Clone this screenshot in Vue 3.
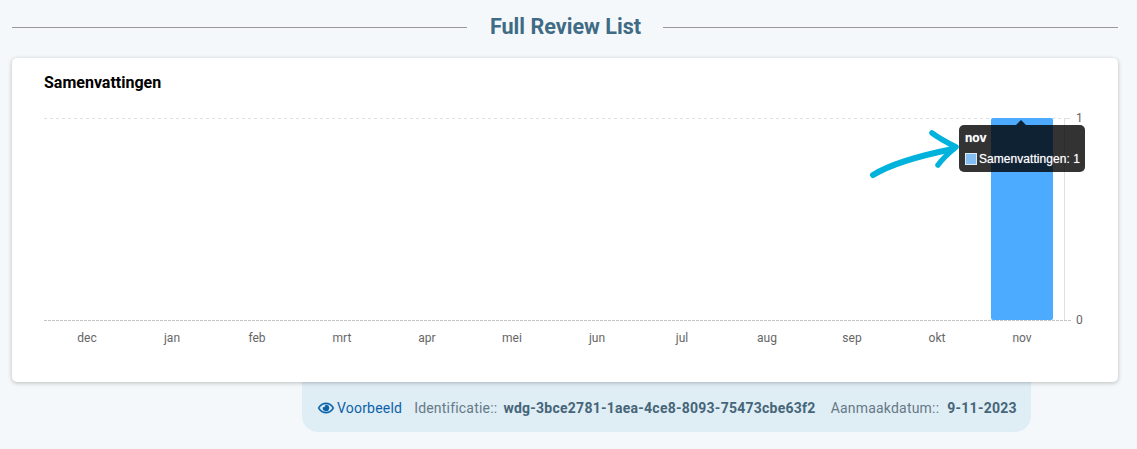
<template>
  <div class="page">
    <div class="heading">
      <span class="rule"></span>
      <h1>Full Review List</h1>
      <span class="rule"></span>
    </div>
    <section class="card">
      <h2>Samenvattingen</h2>
      <div class="chart">
        <svg class="plot" width="1106" height="254" viewBox="0 0 1106 254">
          <line x1="32" y1="10.5" x2="1052" y2="10.5" class="grid" />
          <rect x="979" y="10" width="62" height="202" rx="2" fill="#4dabff" />
          <line x1="1052.5" y1="10" x2="1052.5" y2="212" stroke="#e0e0e0" />
          <line x1="1052" y1="10.5" x2="1058" y2="10.5" stroke="#e0e0e0" />
          <line x1="32" y1="212.5" x2="1060" y2="212.5" class="base" />
          <text x="1064" y="14" class="y">1</text>
          <text x="1064" y="216" class="y">0</text>
          <text v-for="(m, i) in months" :key="m" :x="75 + i * 85" y="234" class="x">{{ m }}</text>
        </svg>
        <svg class="arrow" width="110" height="70" viewBox="0 0 110 70">
          <path d="M15 61 C33 50 60 42 95 35" fill="none" stroke="#00b2dc" stroke-width="6" stroke-linecap="round" />
          <path d="M74 19 C82 25 90 29 98 33 C92 38 85 44 80 51" fill="none" stroke="#00b2dc" stroke-width="5.5" stroke-linecap="round" stroke-linejoin="round" />
        </svg>
        <div class="tooltip">
          <span class="caret"></span>
          <strong>nov</strong>
          <div class="tip-row"><i class="swatch"></i>Samenvattingen: 1</div>
        </div>
      </div>
    </section>
    <div class="meta">
      <a class="preview">
        <svg width="18" height="14" viewBox="0 0 576 512"><path fill="#0b62a8" stroke="#0b62a8" stroke-width="14" d="M288 144a110.900 110.900 0 0 0-31.200 5 55.400 55.400 0 0 1 7.200 27 56 56 0 0 1-56 56 55.400 55.400 0 0 1-27-7.200A111.700 111.700 0 1 0 288 144zm284.500 97.400C518.300 135.600 410.900 64 288 64S57.700 135.600 3.500 241.400a32.400 32.400 0 0 0 0 29.200C57.700 376.400 165.100 448 288 448s230.300-71.600 284.500-177.400a32.400 32.400 0 0 0 0-29.200zM288 400c-98.600 0-189-55-237.800-144C99 167 189.400 112 288 112s189 55 237.800 144C477 345 386.600 400 288 400z"/></svg>
        Voorbeeld
      </a>
      <span class="label">Identificatie::</span>
      <b>wdg-3bce2781-1aea-4ce8-8093-75473cbe63f2</b>
      <span class="label second">Aanmaakdatum::</span>
      <b class="date">9-11-2023</b>
    </div>
  </div>
</template>

<script setup>
const months = ['dec', 'jan', 'feb', 'mrt', 'apr', 'mei', 'jun', 'jul', 'aug', 'sep', 'okt', 'nov']
</script>

<style>
html, body { margin: 0; background: #f5f8fa; }
</style>

<style scoped>
.page {
  width: 1137px;
  height: 449px;
  box-sizing: border-box;
  padding: 12px 19px 0 12px;
  font-family: Roboto, "Liberation Sans", sans-serif;
  overflow: hidden;
  background: #f5f8fa;
}
.heading {
  display: flex;
  align-items: center;
  height: 30px;
  margin-bottom: 16px;
}
.rule { flex: 1; height: 1px; background: #999; }
.heading h1 {
  margin: 0 22px 0 23px;
  font-size: 21.6px;
  line-height: 30px;
  font-weight: 700;
  color: #3f6b85;
}
.card {
  height: 324px;
  box-sizing: border-box;
  padding: 16px 32px 0;
  background: #fff;
  border-radius: 5px;
  box-shadow: 0 1px 4px rgba(0, 0, 0, 0.25);
  position: relative;
  z-index: 1;
}
.card h2 {
  margin: 0;
  font-size: 16px;
  line-height: 18px;
  font-weight: 700;
  color: #000;
}
.chart { position: relative; margin: 16px -32px 0; height: 254px; }
.plot { display: block; }
.grid { stroke: #e0e0e0; stroke-dasharray: 3 3; }
.base { stroke: #c4c4c4; stroke-dasharray: 3 1; }
.y { font-size: 12px; fill: #666; font-family: Roboto, sans-serif; }
.x { font-size: 12px; fill: #666; text-anchor: middle; font-family: Roboto, sans-serif; }
.arrow { position: absolute; left: 846px; top: 6px; z-index: 2; }
.tooltip {
  position: absolute;
  left: 947px;
  top: 17px;
  width: 126px;
  height: 47px;
  box-sizing: border-box;
  padding: 6px 6px;
  border-radius: 5px;
  background: rgba(0, 0, 0, 0.8);
  color: #fff;
  font-family: "Liberation Sans", Arial, sans-serif;
  font-size: 12px;
  line-height: 14px;
  text-shadow: 0 0 1px rgba(255, 255, 255, 0.6);
}
.tooltip strong { display: block; font-weight: 700; }
.caret {
  position: absolute;
  left: 57px;
  top: -5px;
  border: 5px solid transparent;
  border-top: 0;
  border-bottom-color: rgba(0, 0, 0, 0.8);
}
.tip-row { display: flex; align-items: center; margin-top: 7px; white-space: nowrap; letter-spacing: 0.05px; }
.swatch {
  flex: none;
  width: 12px;
  height: 12px;
  box-sizing: border-box;
  margin-right: 2px;
  background: #84bdf2;
  border: 1px solid #dfe8f0;
}
.meta {
  display: flex;
  align-items: center;
  width: 729px;
  height: 50px;
  box-sizing: border-box;
  margin-left: 290px;
  padding: 2px 0 0 15px;
  background: #dfedf5;
  border-radius: 0 0 16px 16px;
  font-size: 14px;
  color: #667985;
  letter-spacing: 0.2px;
}
.preview { display: flex; align-items: center; gap: 2px; color: #0b62a8; margin-right: 12px; }
.meta b { margin-left: 6px; color: #466578; font-weight: 700; letter-spacing: 0.25px; }
.meta b.date { margin-left: 8px; }
.second { margin-left: 15px; }
</style>
